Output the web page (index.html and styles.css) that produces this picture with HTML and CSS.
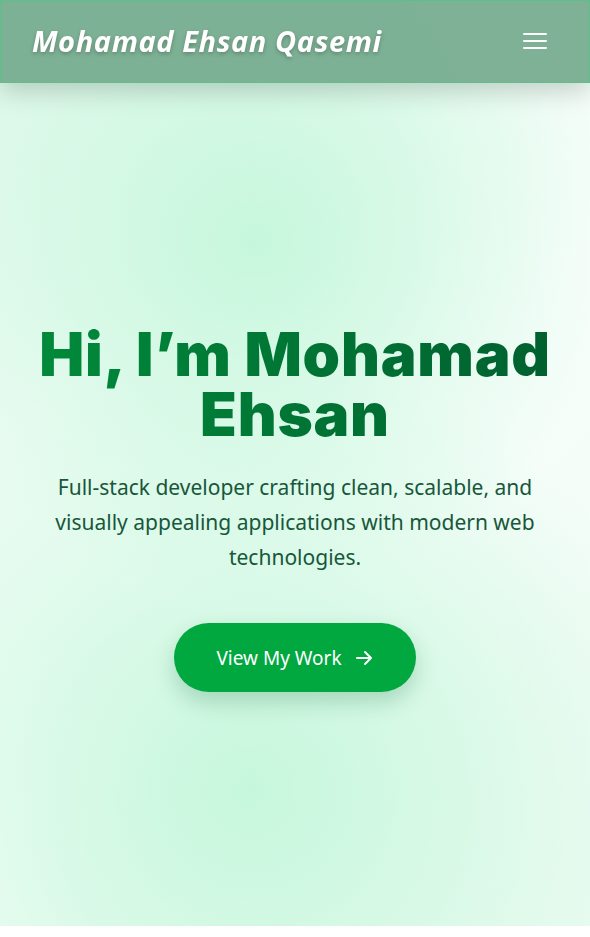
FILE: index.html
```html
<!DOCTYPE html>
<html lang="en">
<head>
<meta charset="utf-8">
<title>Mohamad Ehsan Qasemi</title>
<link rel="stylesheet" href="styles.css">
</head>
<body>
<header class="site-header">
  <span class="brand">Mohamad Ehsan Qasemi</span>
  <button class="menu-btn" aria-label="Menu">
    <svg width="24" height="18" viewBox="0 0 24 18"><path d="M1 2h22M1 9h22M1 16h22" stroke="#fff" stroke-width="2" fill="none" stroke-linecap="round"/></svg>
  </button>
</header>
<section class="hero">
  <h1 class="hero-title">Hi, I’m Mohamad Ehsan</h1>
  <p class="hero-text">Full-stack developer crafting clean, scalable, and visually appealing applications with modern web technologies.</p>
  <a class="cta" href="#work">View My Work
    <svg width="20" height="20" viewBox="0 0 20 20"><path d="M3 10h14M11 4l6 6-6 6" stroke="#fff" stroke-width="2" fill="none" stroke-linecap="round" stroke-linejoin="round"/></svg>
  </a>
</section>
</body>
</html>
```
FILE: styles.css
```css
* { box-sizing: border-box; }
html, body { margin: 0; padding: 0; background: #fff; }
body { font-family: "Noto Sans", "Open Sans", sans-serif; }

.site-header {
  position: fixed;
  top: 0; left: 0; right: 0;
  height: 83px;
  z-index: 10;
  display: flex;
  align-items: center;
  justify-content: space-between;
  padding: 0 42px 0 31px;
  background: rgba(122, 174, 146, 0.97);
  border: 1px solid #5cc08a;
  box-shadow: 0 8px 24px rgba(0, 0, 0, 0.18);
}
.brand {
  color: #fff;
  font-family: "Open Sans", sans-serif;
  font-style: italic;
  font-weight: 700;
  font-size: 29px;
  letter-spacing: 0.6px;
  text-shadow: 0 2px 4px rgba(0, 0, 0, 0.25);
  margin-top: -2px;
}
.menu-btn {
  background: none;
  border: 0;
  padding: 0;
  display: flex;
  margin-top: -2px;
}

.hero {
  height: 926px;
  display: flex;
  flex-direction: column;
  align-items: center;
  justify-content: center;
  text-align: center;
  padding: 90px 30px 0;
  background:
    radial-gradient(circle at 255px 240px, rgba(198, 247, 220, 1) 0, rgba(198, 247, 220, 0.55) 170px, rgba(198, 247, 220, 0) 360px),
    radial-gradient(circle at 250px 790px, rgba(198, 247, 220, 1) 0, rgba(198, 247, 220, 0.6) 200px, rgba(198, 247, 220, 0) 440px),
    linear-gradient(135deg, #e0f9eb 0%, #f8fefb 55%, #eefbf3 100%);
}
.hero-title {
  margin: 0;
  font-family: "Inter", sans-serif;
  font-weight: 900;
  font-size: 60px;
  line-height: 60px;
  letter-spacing: 0.8px;
  background: linear-gradient(90deg, #008a3a, #00602f);
  -webkit-background-clip: text;
  background-clip: text;
  color: transparent;
}
.hero-text {
  margin: 26px 0 0;
  font-size: 21px;
  line-height: 35px;
  color: #17573a;
  max-width: 500px;
}
.cta {
  margin-top: 48px;
  width: 242px;
  height: 69px;
  border-radius: 35px;
  background: #00a83f;
  color: #fff;
  text-decoration: none;
  font-size: 19px;
  display: flex;
  align-items: center;
  justify-content: center;
  gap: 12px;
  box-shadow: 0 10px 22px rgba(0, 100, 50, 0.22);
}
```
